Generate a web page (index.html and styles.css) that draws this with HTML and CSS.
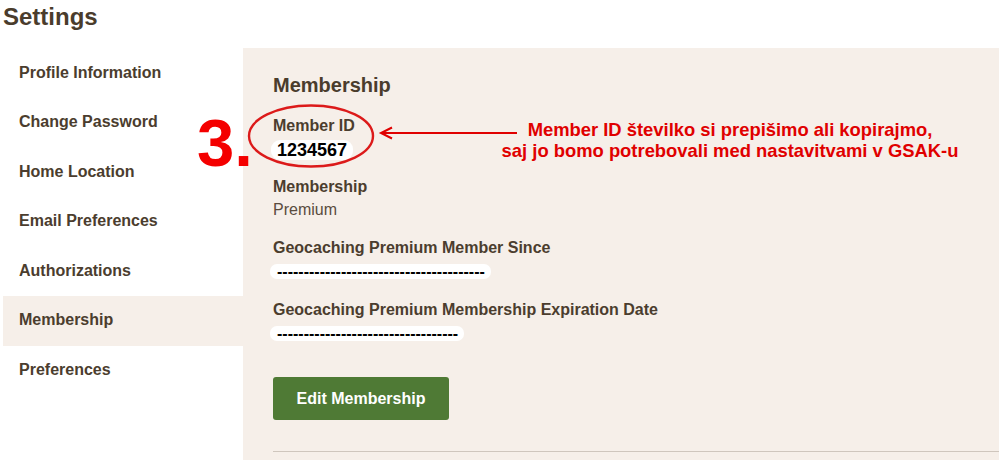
FILE: index.html
```html
<!DOCTYPE html>
<html lang="sl">
<head>
<meta charset="utf-8">
<title>Settings</title>
<link rel="stylesheet" href="styles.css">
</head>
<body>
<div class="page">
  <h1 class="title">Settings</h1>
  <div class="main">
    <nav class="sidebar">
      <div class="nav-item">Profile Information</div>
      <div class="nav-item">Change Password</div>
      <div class="nav-item">Home Location</div>
      <div class="nav-item">Email Preferences</div>
      <div class="nav-item">Authorizations</div>
      <div class="nav-item active">Membership</div>
      <div class="nav-item">Preferences</div>
    </nav>
    <section class="panel">
      <h2 class="panel-title">Membership</h2>
      <div class="label first">Member ID</div>
      <div class="id-box">1234567</div>
      <div class="label">Membership</div>
      <div class="text">Premium</div>
      <div class="label gap-md">Geocaching Premium Member Since</div>
      <div class="dash-box">---------------------------------------</div>
      <div class="label gap-lg">Geocaching Premium Membership Expiration Date</div>
      <div class="dash-box">----------------------------------</div>
      <button class="btn">Edit Membership</button>
      <div class="rule"></div>
    </section>
  </div>
  <div class="step">3.</div>
  <svg class="marks" width="290" height="75" viewBox="0 0 290 75">
    <ellipse cx="71" cy="36" rx="62" ry="30.5" fill="none" stroke="#dc1a1a" stroke-width="2.4"/>
    <line x1="142" y1="33" x2="277" y2="33" stroke="#e00000" stroke-width="2.2"/>
    <polyline points="152,27.5 141,33 152,38.5" fill="none" stroke="#e00000" stroke-width="2"/>
  </svg>
  <div class="note">Member ID številko si prepišimo ali kopirajmo,<br>saj jo bomo potrebovali med nastavitvami v GSAK-u</div>
</div>
</body>
</html>
```
FILE: styles.css
```css
html, body {
  margin: 0;
  padding: 0;
  background: #ffffff;
}
body {
  font-family: "Liberation Sans", Arial, sans-serif;
  color: #4b3d2e;
  overflow: hidden;
}
.page {
  position: relative;
  width: 1000px;
  height: 460px;
  padding-left: 3px;
  box-sizing: border-box;
}
.title {
  margin: 0;
  height: 48px;
  padding-top: 3px;
  box-sizing: border-box;
  font-size: 24px;
  line-height: 28px;
  font-weight: bold;
  color: #4a3c2c;
}
.main {
  display: flex;
  align-items: flex-start;
}
.sidebar {
  width: 240px;
  flex: none;
}
.nav-item {
  padding: 14.5px 0 15.5px 16px;
  font-size: 16px;
  line-height: 19.6px;
  font-weight: bold;
  color: #4b3d2e;
}
.nav-item.active {
  background: #f6efe9;
}
.panel {
  width: 756px;
  height: 420px;
  background: #f6efe9;
  padding: 25px 0 0 30px;
  box-sizing: border-box;
}
.panel-title {
  margin: 0 0 18.5px;
  font-size: 20px;
  line-height: 24px;
  font-weight: bold;
  color: #4a3c2c;
}
.label {
  font-size: 16px;
  line-height: 20px;
  font-weight: bold;
  margin-top: 17px;
}
.label.first {
  margin-top: 0;
}
.label.gap-md {
  margin-top: 18px;
}
.label.gap-lg {
  margin-top: 21.5px;
}
.id-box {
  width: fit-content;
  margin: 4.3px 0 3.7px -2px;
  padding: 1px 6px;
  background: #ffffff;
  border-radius: 9px;
  font-size: 18px;
  line-height: 18px;
  font-weight: bold;
  color: #000000;
}
.text {
  margin-top: 3px;
  font-size: 16px;
  line-height: 20px;
  color: #5a4c3e;
}
.dash-box {
  width: fit-content;
  margin: 6px 0 0 -3px;
  padding: 0 6px 0 7px;
  background: #ffffff;
  border-radius: 7px;
  font-size: 16px;
  line-height: 15px;
  font-weight: bold;
  color: #000000;
  white-space: nowrap;
}
.btn {
  display: block;
  margin-top: 36px;
  width: 176px;
  height: 43px;
  padding: 0;
  border: none;
  border-radius: 3px;
  background: #4f7a35;
  color: #ffffff;
  font-family: "Liberation Sans", Arial, sans-serif;
  font-size: 16px;
  line-height: 43px;
  font-weight: bold;
  text-align: center;
}
.rule {
  margin-top: 31px;
  height: 1px;
  background: #cfc6bd;
}
.step {
  position: absolute;
  left: 197px;
  top: 103px;
  font-size: 67px;
  line-height: 80px;
  font-weight: bold;
  color: #f40000;
}
.marks {
  position: absolute;
  left: 240px;
  top: 100px;
}
.note {
  position: absolute;
  left: 470px;
  top: 119px;
  width: 520px;
  text-align: center;
  font-size: 18.4px;
  line-height: 21px;
  font-weight: bold;
  color: #e00000;
}
```
